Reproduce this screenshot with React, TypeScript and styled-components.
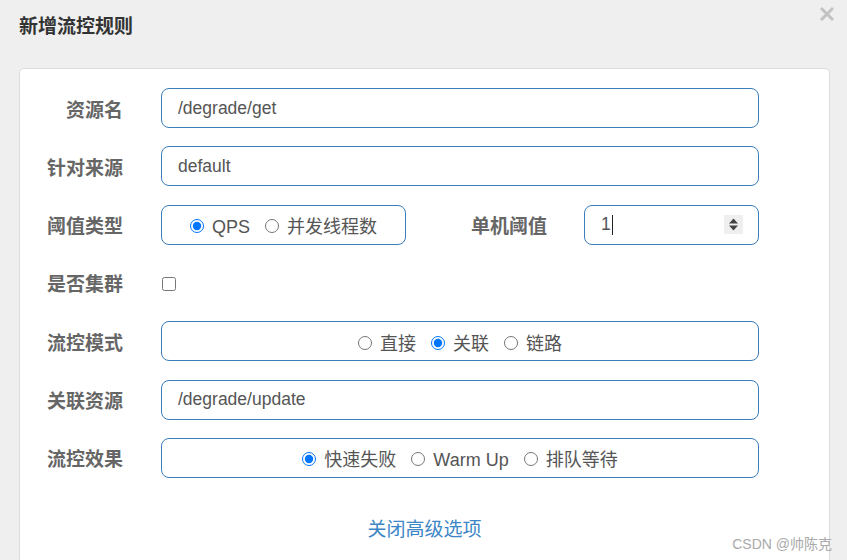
import React from "react";
import styled, { createGlobalStyle } from "styled-components";

const GlobalStyle = createGlobalStyle`
  html, body {
    margin: 0;
    padding: 0;
    background: #efefef;
  }
  body {
    font-family: "Liberation Sans", "Noto Sans CJK SC", sans-serif;
  }
`;

const Page = styled.div`
  position: relative;
  width: 847px;
  height: 560px;
  overflow: hidden;
  background: #efefef;
`;

const Header = styled.div`
  display: flex;
  justify-content: space-between;
  align-items: flex-start;
  height: 54px;
  padding: 0 12px 0 19px;
  margin-bottom: 14px;
`;

const Title = styled.h4`
  margin: 0;
  padding-top: 16px;
  font-size: 19px;
  line-height: 22px;
  font-weight: bold;
  color: #333;
`;

const CloseButton = styled.button`
  margin-top: 6px;
  padding: 0;
  border: 0;
  background: transparent;
  width: 16px;
  height: 16px;
  cursor: pointer;
`;

const Card = styled.div`
  margin-left: 19px;
  width: 811px;
  height: 520px;
  box-sizing: border-box;
  background: #fff;
  border: 1px solid #dcdcdc;
  border-radius: 5px;
  padding: 19px 70px 0 0;
`;

const Form = styled.div`
  display: flex;
  flex-direction: column;
  gap: 18.33px;
`;

const Row = styled.div`
  display: grid;
  grid-template-columns: 103px 1fr;
  column-gap: 38px;
  align-items: center;
  height: 40px;
`;

const Label = styled.label<{ $gap?: number }>`
  text-align: right;
  padding-right: ${(p) => p.$gap || 0}px;
  font-family: "Noto Sans CJK SC", sans-serif;
  font-size: 19px;
  font-weight: bold;
  color: #666;
`;

const Field = styled.div`
  box-sizing: border-box;
  height: 40px;
  border: 1px solid #3b7dbd;
  border-radius: 8px;
  display: flex;
  align-items: center;
  padding: 0 16px;
  font-size: 17.5px;
  color: #555;
  background: #fff;
`;

const TextInput = styled.input`
  border: 0;
  outline: none;
  width: 100%;
  padding: 0;
  font: inherit;
  color: inherit;
  background: transparent;
`;

const RadioGroup = styled(Field)`
  justify-content: center;
  gap: 15px;
`;

const RadioItem = styled.label`
  display: inline-flex;
  align-items: center;
  gap: 8px;
  font-family: "Liberation Sans", "Noto Sans CJK SC", sans-serif;
  font-size: 18px;
  line-height: 24px;
  padding-top: 5px;
  color: #555;
`;

const Radio = styled.input.attrs({ type: "radio" })`
  margin: 0 0 2px 0;
  width: 14px;
  height: 14px;
  accent-color: #0075ff;
`;

const CheckCell = styled.div`
  padding-top: 6px;
`;

const Check = styled.input.attrs({ type: "checkbox" })`
  margin: 0 0 0 1px;
  width: 14px;
  height: 14px;
`;

const SplitRow = styled.div`
  display: grid;
  grid-template-columns: 245px 1fr 175px;
  align-items: center;
`;

const NumberBox = styled(Field)`
  justify-content: space-between;
  padding: 0 15px 0 16px;
`;

const Caret = styled.span`
  display: inline-block;
  width: 1px;
  height: 20px;
  margin-left: 1px;
  background: #222;
  vertical-align: middle;
`;

const Spinner = styled.div`
  width: 19px;
  height: 19px;
  background: #efefef;
  display: flex;
  align-items: center;
  justify-content: center;
`;

const LinkRow = styled.div`
  display: flex;
  justify-content: center;
  padding: 36px 0 0 70px;
`;

const Link = styled.a`
  font-family: "Noto Sans CJK SC", sans-serif;
  font-size: 19px;
  color: #3d86c6;
  text-decoration: none;
  cursor: pointer;
`;

const Watermark = styled.div`
  position: absolute;
  right: 15px;
  bottom: 7px;
  font-family: "Liberation Sans", "Noto Sans CJK SC", sans-serif;
  font-size: 14px;
  color: #a9a9a9;
`;

function Radios({ options, value }: { options: string[]; value: string }) {
  return (
    <>
      {options.map((o) => (
        <RadioItem key={o}>
          <Radio name={options.join()} defaultChecked={o === value} />
          {o}
        </RadioItem>
      ))}
    </>
  );
}

export default function App() {
  return (
    <Page>
      <GlobalStyle />
      <Header>
        <Title>新增流控规则</Title>
        <CloseButton aria-label="close">
          <svg width="16" height="16" viewBox="0 0 16 16">
            <path d="M2 2L14 14M14 2L2 14" stroke="#c2c2c2" strokeWidth="3" />
          </svg>
        </CloseButton>
      </Header>
      <Card>
        <Form>
          <Row>
            <Label>资源名</Label>
            <Field>
              <TextInput defaultValue="/degrade/get" />
            </Field>
          </Row>
          <Row>
            <Label>针对来源</Label>
            <Field>
              <TextInput defaultValue="default" />
            </Field>
          </Row>
          <Row>
            <Label>阈值类型</Label>
            <SplitRow>
              <RadioGroup>
                <Radios options={["QPS", "并发线程数"]} value="QPS" />
              </RadioGroup>
              <Label $gap={37}>单机阈值</Label>
              <NumberBox>
                <span>
                  1<Caret />
                </span>
                <Spinner>
                  <svg width="11" height="13" viewBox="0 0 11 13">
                    <path d="M5.5 0.5L10 5.5H1Z M5.5 12.5L10 7.5H1Z" fill="#444" />
                  </svg>
                </Spinner>
              </NumberBox>
            </SplitRow>
          </Row>
          <Row>
            <Label>是否集群</Label>
            <CheckCell>
              <Check />
            </CheckCell>
          </Row>
          <Row>
            <Label>流控模式</Label>
            <RadioGroup>
              <Radios options={["直接", "关联", "链路"]} value="关联" />
            </RadioGroup>
          </Row>
          <Row>
            <Label>关联资源</Label>
            <Field>
              <TextInput defaultValue="/degrade/update" />
            </Field>
          </Row>
          <Row>
            <Label>流控效果</Label>
            <RadioGroup>
              <Radios options={["快速失败", "Warm Up", "排队等待"]} value="快速失败" />
            </RadioGroup>
          </Row>
        </Form>
        <LinkRow>
          <Link>关闭高级选项</Link>
        </LinkRow>
      </Card>
      <Watermark>CSDN @帅陈克</Watermark>
    </Page>
  );
}
